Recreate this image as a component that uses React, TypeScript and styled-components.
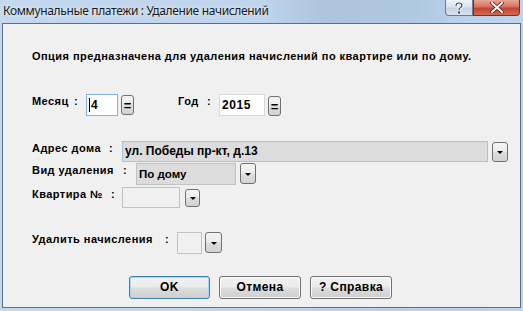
import React from 'react';
import styled, { createGlobalStyle } from 'styled-components';

const GlobalStyle = createGlobalStyle`
  html, body {
    margin: 0;
    padding: 0;
    overflow: hidden;
  }
`;

const Window = styled.div`
  width: 523px;
  height: 311px;
  display: flex;
  flex-direction: column;
  background: linear-gradient(90deg, #c3d8ee 0%, #bfd5ed 50%, #b7cfea 75%, #bdd4ec 100%);
`;

const TitleBar = styled.div`
  height: 23px;
  display: flex;
  align-items: flex-start;
  justify-content: space-between;
  background: linear-gradient(90deg, rgba(255,255,255,0) 0%, rgba(255,255,255,0) 50%, rgba(150,170,195,0.35) 62%, rgba(150,170,195,0.2) 80%, rgba(255,255,255,0) 88%);
`;

const Title = styled.div`
  padding: 3px 0 0 3px;
  font-family: 'Noto Sans', 'Open Sans', sans-serif;
  font-size: 12px;
  letter-spacing: -0.35px;
  line-height: 16px;
  color: #1a1a1a;
  text-shadow: 0 0 4px rgba(255, 255, 255, 0.9);
`;

const CaptionButtons = styled.div`
  display: flex;
  margin-right: 3px;
`;

const CaptionButton = styled.div<{ $close?: boolean }>`
  width: ${(p) => (p.$close ? 47 : 28)}px;
  height: 16px;
  box-sizing: border-box;
  border: 1px solid ${(p) => (p.$close ? '#7a2d22' : '#6a7b8e')};
  border-top: none;
  border-radius: ${(p) => (p.$close ? '0 0 4px 0' : '0 0 0 4px')};
  background: ${(p) =>
    p.$close
      ? 'linear-gradient(180deg, #e6a595 0%, #d6725f 45%, #c4442e 55%, #d36b52 100%)'
      : 'linear-gradient(180deg, #eef3f9 0%, #dae4f0 45%, #c6d4e5 55%, #d6e2ef 100%)'};
  display: flex;
  align-items: center;
  justify-content: center;
`;

const Client = styled.div`
  flex: 1;
  margin: 0 2px 3px 2px;
  border: 1px solid #5f6f80;
  background: #f0f0f0;
  display: flex;
  flex-direction: column;
  font-family: 'Liberation Sans', Arial, sans-serif;
  font-weight: bold;
  font-size: 11px;
  letter-spacing: 0.45px;
  line-height: 13px;
  color: #000;
`;

const Description = styled.div`
  margin: 26px 0 0 29px;
`;

const Row = styled.div<{ $mt: number }>`
  display: flex;
  align-items: flex-start;
  margin-top: ${(p) => p.$mt}px;
  padding-left: 29px;
`;

const Label = styled.span<{ $w: number; $ml?: number }>`
  width: ${(p) => p.$w}px;
  margin-left: ${(p) => p.$ml ?? 0}px;
  padding-top: 1px;
  white-space: nowrap;
`;

const Colon = styled.span<{ $w: number }>`
  width: ${(p) => p.$w}px;
  padding-top: 1px;
`;

type FieldKind = 'focus' | 'white' | 'grayBlue' | 'gray' | 'empty';

const Field = styled.div<{ $w: number; $h: number; $kind: FieldKind; $fs?: number; $ls?: number }>`
  width: ${(p) => p.$w}px;
  height: ${(p) => p.$h}px;
  box-sizing: border-box;
  display: flex;
  align-items: center;
  padding-left: 2px;
  border: 1px solid
    ${(p) =>
      p.$kind === 'focus'
        ? '#7eb4ea'
        : p.$kind === 'grayBlue'
        ? '#a9c3df'
        : p.$kind === 'white'
        ? '#d5d9df'
        : '#c2c2c2'};
  background: ${(p) =>
    p.$kind === 'focus' || p.$kind === 'white'
      ? '#ffffff'
      : p.$kind === 'empty'
      ? '#f0f0f0'
      : '#dcdcdc'};
  font-size: ${(p) => p.$fs ?? 11}px;
  letter-spacing: ${(p) => p.$ls ?? 0}px;
`;

const Caret = styled.span`
  width: 1px;
  height: 14px;
  background: #000;
  margin-right: 1px;
`;

const SmallButton = styled.div<{ $w: number; $h: number; $ml: number; $mt?: number }>`
  width: ${(p) => p.$w}px;
  height: ${(p) => p.$h}px;
  margin-left: ${(p) => p.$ml}px;
  margin-top: ${(p) => p.$mt ?? 0}px;
  box-sizing: border-box;
  border: 1px solid #707070;
  border-radius: 3px;
  background: linear-gradient(180deg, #f4f4f4 0%, #ebebeb 48%, #dddddd 52%, #d3d3d3 100%);
  display: flex;
  align-items: center;
  justify-content: center;
`;

const Arrow = styled.span`
  width: 0;
  height: 0;
  border-left: 3px solid transparent;
  border-right: 3px solid transparent;
  border-top: 3px solid #000;
  margin-top: 1px;
`;

const EqGlyph = styled.span`
  font-size: 13px;
  line-height: 13px;
  letter-spacing: 0;
  font-weight: bold;
`;

const Buttons = styled.div`
  display: flex;
  gap: 9px;
  margin: 22px 0 0 126px;
`;

const Button = styled.div<{ $w: number; $default?: boolean }>`
  width: ${(p) => p.$w}px;
  height: 23px;
  box-sizing: border-box;
  border: 1px solid ${(p) => (p.$default ? '#3c7fb1' : '#707070')};
  border-radius: 3px;
  background: linear-gradient(180deg, #f2f2f2 0%, #ebebeb 48%, #dddddd 52%, #cfcfcf 100%);
  box-shadow: ${(p) => (p.$default ? 'inset 0 0 0 1px #a8d8f5' : 'inset 0 0 0 1px #fbfbfb')};
  display: flex;
  align-items: center;
  justify-content: center;
  font-size: 12px;
  letter-spacing: 0.4px;
`;

const Dropdown = ({ w, h, ml, mt }: { w: number; h: number; ml: number; mt?: number }) => (
  <SmallButton $w={w} $h={h} $ml={ml} $mt={mt}>
    <Arrow />
  </SmallButton>
);

export default function App() {
  return (
    <>
      <GlobalStyle />
      <Window>
        <TitleBar>
          <Title>Коммунальные платежи : Удаление начислений</Title>
          <CaptionButtons>
            <CaptionButton>
              <svg width="10" height="12" viewBox="0 0 10 12">
                <path d="M2 4 Q2 1 5 1 Q8 1 8 3.5 Q8 5 6 6 Q5 6.5 5 8" fill="none" stroke="#fff" strokeWidth="3" />
                <path d="M2 4 Q2 1 5 1 Q8 1 8 3.5 Q8 5 6 6 Q5 6.5 5 8" fill="none" stroke="#3d4a5a" strokeWidth="1.2" />
                <rect x="4" y="9.5" width="2" height="2" fill="#3d4a5a" />
              </svg>
            </CaptionButton>
            <CaptionButton $close>
              <svg width="14" height="11" viewBox="0 0 14 11">
                <path d="M2 1 L12 10 M12 1 L2 10" stroke="#5a1e14" strokeWidth="3.6" strokeLinecap="round" />
                <path d="M2 1 L12 10 M12 1 L2 10" stroke="#ffffff" strokeWidth="2" strokeLinecap="round" />
              </svg>
            </CaptionButton>
          </CaptionButtons>
        </TitleBar>
        <Client>
          <Description>Опция предназначена для удаления начислений по квартире или по дому.</Description>

          <Row $mt={31}>
            <Label $w={42}>Месяц</Label>
            <Colon $w={12}>:</Colon>
            <Field $w={32} $h={22} $kind="focus" $fs={12}>
              <Caret />4
            </Field>
            <SmallButton $w={13} $h={20} $ml={3} $mt={1}>
              <EqGlyph>=</EqGlyph>
            </SmallButton>
            <Label $w={29} $ml={44}>Год</Label>
            <Colon $w={12}>:</Colon>
            <Field $w={46} $h={22} $kind="white" $fs={12} $ls={0.6}>2015</Field>
            <SmallButton $w={13} $h={20} $ml={3} $mt={2}>
              <EqGlyph>=</EqGlyph>
            </SmallButton>
          </Row>

          <Row $mt={25}>
            <Label $w={77}>Адрес дома</Label>
            <Colon $w={13}>:</Colon>
            <Field $w={366} $h={21} $kind="grayBlue" $fs={12}>ул. Победы пр-кт, д.13</Field>
            <Dropdown w={16} h={20} ml={4} mt={1} />
          </Row>

          <Row $mt={1}>
            <Label $w={91}>Вид удаления</Label>
            <Colon $w={13}>:</Colon>
            <Field $w={100} $h={22} $kind="gray" $fs={11.5}>По дому</Field>
            <Dropdown w={16} h={21} ml={4} />
          </Row>

          <Row $mt={2}>
            <Label $w={79}>Квартира №</Label>
            <Colon $w={11}>:</Colon>
            <Field $w={58} $h={21} $kind="empty" />
            <Dropdown w={15} h={18} ml={5} mt={2} />
          </Row>

          <Row $mt={24}>
            <Label $w={133}>Удалить начисления</Label>
            <Colon $w={12}>:</Colon>
            <Field $w={25} $h={22} $kind="empty" />
            <Dropdown w={17} h={21} ml={3} />
          </Row>

          <Buttons>
            <Button $w={81} $default>OK</Button>
            <Button $w={82}>Отмена</Button>
            <Button $w={82}>? Справка</Button>
          </Buttons>
        </Client>
      </Window>
    </>
  );
}
